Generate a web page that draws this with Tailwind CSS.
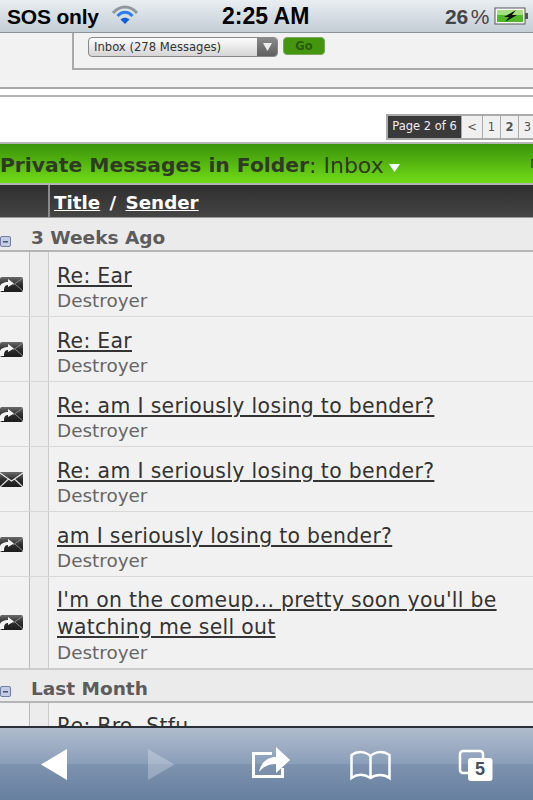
<!DOCTYPE html>
<html><head><meta charset="utf-8"><script src="https://cdn.jsdelivr.net/npm/@tailwindcss/browser@4"></script></head>
<body class="bg-white">
<svg class="absolute w-0 h-0"><defs>
<linearGradient id="env" x1="0" y1="0" x2="0" y2="1"><stop offset="0" stop-color="#6a6a6a"/><stop offset="0.5" stop-color="#2e2e2e"/><stop offset="1" stop-color="#1c1c1c"/></linearGradient>
<g id="fwd"><rect x="0" y="0" width="23" height="15" rx="2" fill="url(#env)"/><path d="M23 1 L13 8 M23 14 L15 7" stroke="#888" stroke-width="1" fill="none"/><path d="M0 14 V9 C1 6 5 5 8 5 L8 2 L14 6.500 L8 10 L8 8 C5 8 4 10 4 14 Z" fill="#f4f4f4"/></g>
<g id="mail"><rect x="0" y="0" width="23" height="15" rx="1" fill="url(#env)"/><path d="M0 1 L11.500 9 L23 1 M0 15 L8.500 7 M23 15 L14.500 7" stroke="#e4e4e4" stroke-width="1.200" fill="none"/></g>
<g id="minus"><rect x="0.500" y="0.500" width="10" height="10" rx="1.500" fill="#c3cce0" stroke="#6c7fa8"/><rect x="3" y="5" width="5" height="1.500" fill="#44527a"/></g>
</defs></svg>
<div class="w-[533px] h-[800px] overflow-hidden flex flex-col font-['DejaVu_Sans',sans-serif]">
  <!-- status bar -->
  <div class="h-[33px] shrink-0 flex items-center bg-gradient-to-b from-[#e9eef1] to-[#c3ced5] border-b border-[#8a949b] font-['Liberation_Sans',sans-serif] relative">
    <span class="ml-[7px] text-[21px] font-bold text-black leading-none tracking-[-0.2px]">SOS only</span>
    <svg class="ml-[12px] -mt-[3px]" width="28" height="20" viewBox="0 0 28 20"><path d="M2 8 C9 0 19 0 26 8" stroke="#8f979c" stroke-width="3" fill="none"/><path d="M6.500 11 C11 6 17 6 21.500 11" stroke="#2f7de8" stroke-width="3" fill="none"/><path d="M14 19 L9.500 14.500 C12 12 16 12 18.500 14.500 Z" fill="#0f5fd8"/></svg>
    <span class="absolute left-[222px] text-[23px] font-bold text-black leading-none">2:25 AM</span>
    <span class="absolute left-[445px] text-[21px] font-bold text-[#444] leading-none tracking-[-0.3px]">26<span class="font-normal ml-[3px]">%</span></span>
    <svg class="absolute left-[494px] top-[7px]" width="36" height="18" viewBox="0 0 36 18"><rect x="1" y="1" width="30" height="16" fill="#fff" stroke="#555"/><rect x="3" y="3" width="26" height="12" fill="#50b82a"/><rect x="3" y="3" width="26" height="5" fill="#a5e080"/><rect x="31" y="6" width="3" height="6" fill="#555"/><path d="M22 3 L10 10 L15 10 L11 15 L23 8 L18 8 Z" fill="#111"/></svg>
  </div>
  <div class="flex-1 min-h-0 overflow-hidden">
    <!-- top panel -->
    <div class="h-[56px] bg-[#f2f2f2] border-b-2 border-[#a8a8a8] pl-[72px]">
      <div class="h-[37px] border-l-2 border-b-2 border-[#aaa] pl-[14px] pt-[4px] flex items-start gap-[5px]">
        <div class="w-[190px] h-[20px] rounded-[4px] border border-[#888] bg-gradient-to-b from-[#fdfdfd] to-[#d5d5d5] flex justify-between overflow-hidden">
          <span class="pl-[5px] text-[11.6px] leading-[18px] text-[#333]">Inbox (278 Messages)</span>
          <span class="w-[20px] bg-gradient-to-b from-[#8a8a8a] to-[#5f5f5f] flex items-center justify-center"><svg width="9" height="8" viewBox="0 0 9 8"><path d="M0 0 H9 L4.500 8 Z" fill="#eee"/></svg></span>
        </div>
        <div class="w-[42px] h-[18px] rounded-[4px] bg-[#44960f] border border-[#7aa55a] text-center text-[11.500px] font-bold leading-[16px] text-[#2a5a0c]">Go</div>
      </div>
    </div>
    <div class="h-[8px] bg-white border-b-2 border-[#b5b5b5]"></div>
    <!-- pager -->
    <div class="h-[45px] bg-white flex justify-end items-start pt-[17px] -mr-[5px] overflow-hidden">
      <div class="flex h-[26px] border-2 border-[#aaa] bg-[#aaa] text-[11.500px] gap-[1px] text-[#555] shrink-0">
        <span class="w-[73px] bg-[#3a3a3a] text-[#eee] text-center leading-[21px]">Page 2 of 6</span>
        <span class="w-[20px] bg-[#f0f0f0] text-center leading-[22px]">&lt;</span>
        <span class="w-[17px] bg-[#f0f0f0] text-center leading-[22px]">1</span>
        <span class="w-[17px] bg-[#f0f0f0] text-center leading-[22px] font-bold">2</span>
        <span class="w-[17px] bg-[#f0f0f0] text-center leading-[22px]">3</span>
      </div>
    </div>
    <!-- green -->
    <div class="h-[43px] pt-[3px] border-t-2 border-b-2 border-[#b5b5b5] bg-gradient-to-b from-[#3a9309] to-[#72dc18] flex items-center text-[20.300px] text-[#2f3a22] whitespace-nowrap relative overflow-hidden">
      <span class="font-bold">Private Messages in Folder</span><span class="text-[22px]">:&nbsp;Inbox</span>
      <svg class="ml-[5px] mt-[5px]" width="11" height="8" viewBox="0 0 11 8"><path d="M0 0 H11 L5.500 8 Z" fill="#f4f8ff"/></svg>
      <span class="absolute left-[530px] top-[10px] text-[13px]">M</span>
    </div>
    <!-- head -->
    <div class="h-[33px] bg-gradient-to-b from-[#2f2f2f] to-[#454545] border-b border-[#999] flex">
      <div class="w-[50px] border-r-2 border-[#8a8a8a]"></div>
      <div class="pl-[4px] pt-[4px] text-[18.300px] font-bold text-white leading-[28px]"><span class="underline">Title</span><span class="mx-[3px]"> / </span><span class="underline">Sender</span></div>
    </div>
    <div class="h-[34px] bg-[#ebebeb] border-b-2 border-[#b5b5b5] relative pl-[31px] text-[18.500px] font-bold text-[#5c5c5c] leading-[39px]">
      <svg class="absolute left-0 top-[18px]" width="12" height="12"><use href="#minus"/></svg>3 Weeks Ago
    </div>
    <!-- rows -->
    <div class="flex h-[65px] bg-[#f1f1f1] border-b border-[#d8d8d8]">
      <div class="w-[30px] border-r border-[#bbb] flex items-center"><svg width="23" height="15"><use href="#fwd"/></svg></div>
      <div class="w-[19px] border-r border-[#ccc] bg-[#ececec]"></div>
      <div class="pl-[8px] pt-[10px]"><div class="text-[20.400px] leading-[28px] text-[#333] underline tracking-[0.3px]">Re: Ear</div><div class="text-[18.400px] leading-[22px] text-[#666]">Destroyer</div></div>
    </div>
    <div class="flex h-[65px] bg-[#f1f1f1] border-b border-[#d8d8d8]">
      <div class="w-[30px] border-r border-[#bbb] flex items-center"><svg width="23" height="15"><use href="#fwd"/></svg></div>
      <div class="w-[19px] border-r border-[#ccc] bg-[#ececec]"></div>
      <div class="pl-[8px] pt-[10px]"><div class="text-[20.400px] leading-[28px] text-[#333] underline tracking-[0.3px]">Re: Ear</div><div class="text-[18.400px] leading-[22px] text-[#666]">Destroyer</div></div>
    </div>
    <div class="flex h-[65px] bg-[#f1f1f1] border-b border-[#d8d8d8]">
      <div class="w-[30px] border-r border-[#bbb] flex items-center"><svg width="23" height="15"><use href="#fwd"/></svg></div>
      <div class="w-[19px] border-r border-[#ccc] bg-[#ececec]"></div>
      <div class="pl-[8px] pt-[10px]"><div class="text-[20.400px] leading-[28px] text-[#333] underline tracking-[0.35px]">Re: am I seriously losing to bender?</div><div class="text-[18.400px] leading-[22px] text-[#666]">Destroyer</div></div>
    </div>
    <div class="flex h-[65px] bg-[#f1f1f1] border-b border-[#d8d8d8]">
      <div class="w-[30px] border-r border-[#bbb] flex items-center"><svg width="23" height="15"><use href="#mail"/></svg></div>
      <div class="w-[19px] border-r border-[#ccc] bg-[#ececec]"></div>
      <div class="pl-[8px] pt-[10px]"><div class="text-[20.400px] leading-[28px] text-[#333] underline tracking-[0.35px]">Re: am I seriously losing to bender?</div><div class="text-[18.400px] leading-[22px] text-[#666]">Destroyer</div></div>
    </div>
    <div class="flex h-[65px] bg-[#f1f1f1] border-b border-[#d8d8d8]">
      <div class="w-[30px] border-r border-[#bbb] flex items-center"><svg width="23" height="15"><use href="#fwd"/></svg></div>
      <div class="w-[19px] border-r border-[#ccc] bg-[#ececec]"></div>
      <div class="pl-[8px] pt-[10px]"><div class="text-[20.400px] leading-[28px] text-[#333] underline tracking-[0.3px]">am I seriously losing to bender?</div><div class="text-[18.400px] leading-[22px] text-[#666]">Destroyer</div></div>
    </div>
    <div class="flex h-[93px] bg-[#f1f1f1] border-b-2 border-[#ccc]">
      <div class="w-[30px] border-r border-[#bbb] flex items-center"><svg width="23" height="15"><use href="#fwd"/></svg></div>
      <div class="w-[19px] border-r border-[#ccc] bg-[#ececec]"></div>
      <div class="pl-[8px] pt-[10px]"><div class="text-[20.400px] leading-[27px] text-[#333] underline tracking-[0.3px] w-[460px]">I'm on the comeup... pretty soon you'll be watching me sell out</div><div class="text-[18.400px] leading-[23px] text-[#666]">Destroyer</div></div>
    </div>
    <div class="h-[33px] bg-[#ebebeb] border-b-2 border-[#b5b5b5] relative pl-[31px] text-[18.500px] font-bold text-[#5c5c5c] leading-[37px]">
      <svg class="absolute left-0 top-[16px]" width="12" height="12"><use href="#minus"/></svg>Last Month
    </div>
    <div class="flex h-[65px] bg-[#f1f1f1]">
      <div class="w-[30px] border-r border-[#bbb]"></div>
      <div class="w-[19px] border-r border-[#ccc] bg-[#ececec]"></div>
      <div class="pl-[8px] pt-[9px]"><div class="text-[20.400px] leading-[29px] text-[#333] underline tracking-[0.3px]">Re: Bro, Stfu</div></div>
    </div>
  </div>
  <!-- toolbar -->
  <div class="h-[74px] shrink-0 relative border-t-2 border-[#2a2e36] bg-[linear-gradient(to_bottom,#b0bccd_0%,#8a9eb9_50%,#7e93af_50%,#66809f_100%)]">
    <svg class="absolute left-0 top-0" width="533" height="72" viewBox="0 0 533 72">
      <path d="M41 36.500 L67 21 V52 Z" fill="#fff"/>
      <path d="M174.500 36.500 L148 21 V52 Z" fill="#fff" fill-opacity="0.25"/>
      <path d="M272 25.500 H253.500 V48.500 H282.500 V40" fill="none" stroke="#fff" stroke-width="3"/>
      <path d="M259 44 C261 34 268 29 276 29 V19 L290 32 L276 45 V36 C268 36 263 39 259 44 Z" fill="#fff"/>
      <path d="M370.500 50 C364 46 357 46 351.500 50 V27 C357 23 365 23 370.500 28 C376 23 384 23 389.500 27 V50 C384 46 376 46 370.500 50 Z M370.500 28 V50" fill="none" stroke="#fff" stroke-width="2.500"/>
      <rect x="460" y="23" width="23" height="22" rx="3" fill="none" stroke="#fff" stroke-width="2.500"/>
      <rect x="468" y="30" width="24.500" height="23" rx="3" fill="#fff"/>
    </svg>
    <span class="absolute left-[468px] top-[30px] w-[24px] h-[23px] text-center text-[18px] font-bold leading-[23px] text-[#46505f] font-['Liberation_Sans',sans-serif]">5</span>
  </div>
</div>
</body></html>
